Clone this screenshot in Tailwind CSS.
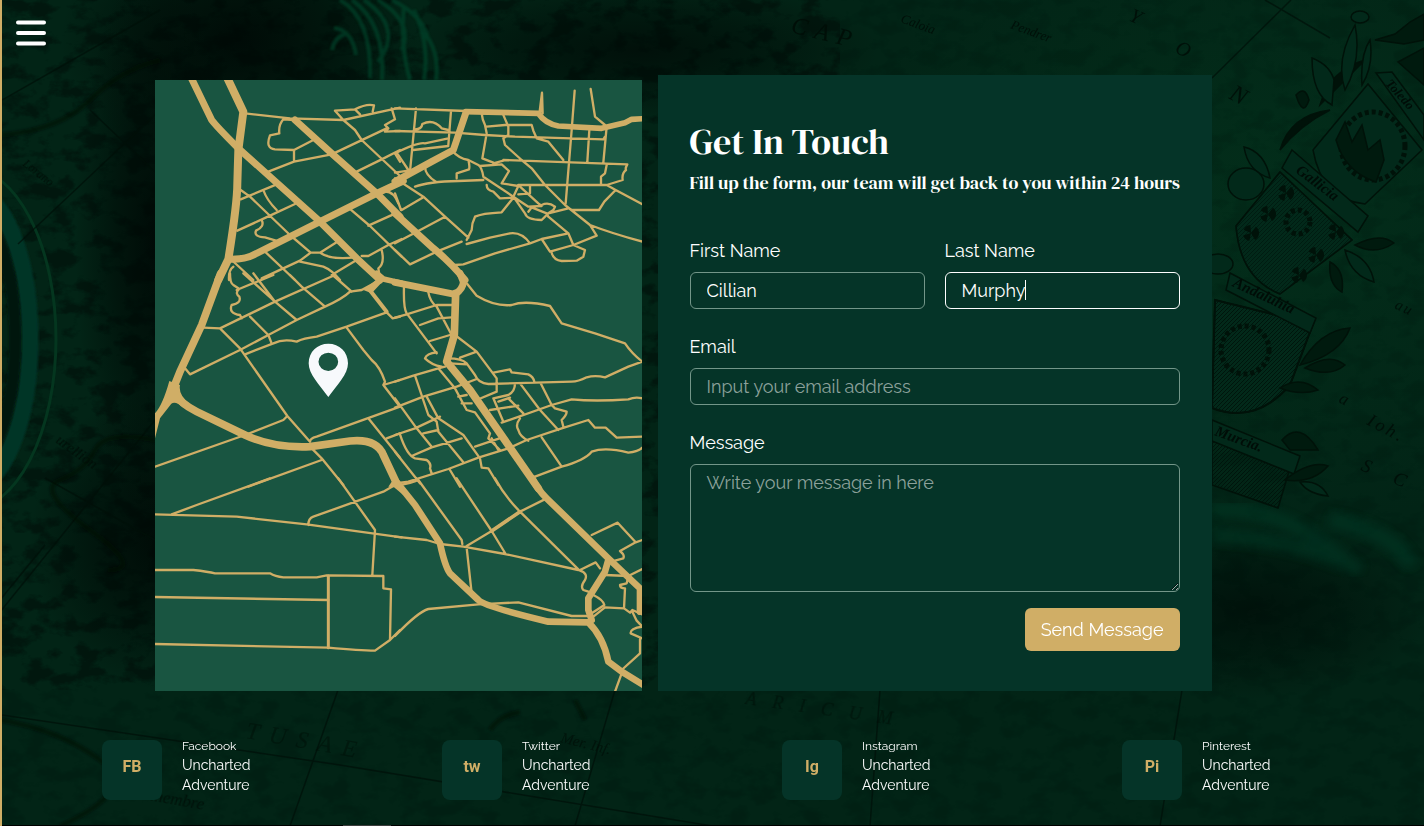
<!DOCTYPE html>
<html lang="en">
<head>
<meta charset="utf-8">
<meta name="viewport" content="width=device-width, initial-scale=1">
<title>Uncharted Adventure – Get In Touch</title>
<script src="https://cdn.jsdelivr.net/npm/@tailwindcss/browser@4"></script>
</head>
<body class="relative min-h-screen overflow-x-hidden border-l-2 border-[#d0ae66] bg-[#022114] font-['Raleway','Lato',sans-serif] text-white">

<!-- Old chart backdrop -->
<svg class="absolute inset-0 -z-10 h-full w-full" viewBox="2 0 1422 826" preserveAspectRatio="xMidYMid slice" aria-hidden="true">
  <defs>
    <radialGradient id="dark"><stop offset="0" stop-color="#000805" stop-opacity=".9"/><stop offset=".5" stop-color="#000c07" stop-opacity=".6"/><stop offset="1" stop-color="#000c07" stop-opacity="0"/></radialGradient>
    <radialGradient id="lit"><stop offset="0" stop-color="#03341d" stop-opacity=".6"/><stop offset="1" stop-color="#03341d" stop-opacity="0"/></radialGradient>
    <filter id="terrain" x="0" y="0" width="100%" height="100%" color-interpolation-filters="sRGB"><feTurbulence type="fractalNoise" baseFrequency=".04 .06" numOctaves="5" seed="8"/><feColorMatrix values="0 0 0 0 0  0 0 0 0 .03  0 0 0 0 .02  5 0 0 0 -2.4"/></filter>
    <filter id="soft"><feGaussianBlur stdDeviation="5"/></filter>
    <filter id="soft1"><feGaussianBlur stdDeviation="1"/></filter>
    <pattern id="hatch" width="4" height="4" patternUnits="userSpaceOnUse"><path d="M0 4 4 0" stroke="#00150c" stroke-width="1"/></pattern>
  </defs>
  <rect width="1424" height="826" fill="#022416"/>
  <ellipse cx="1270" cy="200" rx="420" ry="330" fill="url(#lit)"/>
  <ellipse cx="240" cy="40" rx="180" ry="130" fill="url(#dark)"/>
  <ellipse cx="160" cy="540" rx="130" ry="150" fill="url(#dark)"/>
  <ellipse cx="155" cy="240" rx="80" ry="280" fill="url(#dark)"/>
  <ellipse cx="640" cy="50" rx="240" ry="70" fill="url(#dark)" opacity=".8"/>
  <ellipse cx="1250" cy="610" rx="180" ry="90" fill="url(#dark)" opacity=".7"/>
  <rect width="840" height="690" filter="url(#terrain)" opacity=".45"/>
  <rect y="690" width="840" height="136" filter="url(#terrain)" opacity=".15"/>
  <rect x="840" width="584" height="826" filter="url(#terrain)" opacity=".12"/>

  <!-- Plume -->
  <g fill="none" stroke="#044a2e" stroke-width="4" opacity=".6" filter="url(#soft1)">
    <path d="M332 50Q334 38 345 34M334 28Q352 30 356 55M340 0Q372 18 370 78M352 0Q386 24 382 80M364 0Q404 28 378 62M378 0Q414 22 402 50M392 0Q424 16 428 40M404 6Q400 46 410 80M414 10Q430 44 424 80M422 30Q440 50 436 80"/>
  </g>
  <!-- Brass ring -->
  <g fill="none">
    <ellipse cx="-32" cy="339" rx="62" ry="150" stroke="#043626" stroke-width="17" filter="url(#soft1)"/>
    <ellipse cx="-32" cy="339" rx="47" ry="130" stroke="#00160e" stroke-width="12" filter="url(#soft1)"/>
    <ellipse cx="-34" cy="339" rx="90" ry="172" stroke="#04361f" stroke-width="3"/>
  </g>
  <!-- Rope -->
  <g fill="none" stroke="#04402a" stroke-width="14" opacity=".45" filter="url(#soft)">
    <path d="M1212 510Q1280 505 1345 560M1212 535Q1300 540 1360 570M1330 520Q1390 530 1412 565"/>
  </g>

  <!-- Rhumb lines -->
  <g stroke="#000f08" stroke-width="1.5" fill="none" opacity=".7">
    <path d="M18 244 160 110M2 100 160 10M0 612 155 420M0 600 45 545M1291 0 1212 78M1265 0 1330 38M90 110 155 172M2 715 340 765 712 826M338 690 290 826M615 690 575 826M1182 690 1160 826M880 690 870 826M45 478 155 540"/>
  </g>
  <g stroke="#000b06" stroke-width="5" fill="none" opacity=".5" filter="url(#soft1)">
    <path d="M2 135Q60 130 90 100T160 60M155 440Q105 430 95 450T60 480 90 530 108 570M0 720Q60 730 100 760T60 826M490 730Q500 715 520 712M575 700 585 720"/>
  </g>

  <!-- Chart lettering -->
  <g font-family="'Liberation Serif',serif" font-style="italic" fill="#000d07" opacity=".85">
    <text x="745" y="704" font-size="18" letter-spacing="16" opacity=".6" transform="rotate(8 745 704)">ARICUM</text>
    <text x="790" y="32" font-size="24" letter-spacing="8" transform="rotate(14 790 32)">CAP</text>
    <text x="1128" y="20" font-size="20" transform="rotate(25 1128 20)">Y</text>
    <text x="1174" y="52" font-size="20" transform="rotate(25 1174 52)">O</text>
    <text x="1228" y="98" font-size="24" transform="rotate(28 1228 98)">N</text>
    <text x="1338" y="402" font-size="17" transform="rotate(25 1338 402)">a</text>
    <text x="1366" y="424" font-size="18" letter-spacing="3" transform="rotate(28 1366 424)">Ioh.</text>
    <text x="1360" y="470" font-size="19" letter-spacing="10" transform="rotate(22 1360 470)">S C</text>
    <text x="1394" y="308" font-size="15" letter-spacing="2" transform="rotate(25 1394 308)">au</text>
    <text x="55" y="442" font-size="15" transform="rotate(36 55 442)">urellion</text>
    <text x="245" y="738" font-size="24" letter-spacing="10" opacity=".5" transform="rotate(10 245 738)">TUSAE</text>
    <text x="125" y="796" font-size="17" opacity=".8" transform="rotate(10 125 796)">Bormembre</text>
    <text x="560" y="742" font-size="15" opacity=".7" transform="rotate(14 560 742)">Mer. Inf.</text>
    <text x="900" y="22" font-size="13" transform="rotate(20 900 22)">Caloia</text>
    <text x="1010" y="28" font-size="13" transform="rotate(20 1010 28)">Pendrer</text>
    <text x="22" y="165" font-size="12" transform="rotate(38 22 165)">Lorano</text>
  </g>

  <!-- Heraldic shields -->
  <g stroke="#001209" stroke-width="1.5" fill="#02291a">
    <path fill="#001209" d="M1280 150Q1290 115 1330 110 1300 125 1280 150ZM1365 60Q1330 70 1320 105L1345 80Z"/>
    <path d="M1312 58Q1330 65 1334 80L1332 105Q1312 95 1312 58ZM1345 90Q1335 60 1355 25 1362 60 1345 90ZM1362 85Q1360 55 1370 40 1374 65 1362 85ZM1244 147Q1265 152 1270 178 1248 172 1244 147Z"/>
    <ellipse cx="1360" cy="17" rx="9" ry="6"/><ellipse cx="1246" cy="184" rx="18" ry="16"/><ellipse cx="1218" cy="264" rx="15" ry="10"/>
    <path fill="#001a0e" d="M1375 40 1395 34 1410 22 1424 14V40L1404 44ZM1398 62 1424 48V85Z"/>
    <path d="M1313 150 1368 84 1422 150 1365 204Q1322 200 1313 150Z"/>
    <path d="M1376 73 1392 72 1424 115V140Z"/>
    <ellipse cx="1373" cy="146" rx="32" ry="34" fill="none" stroke-width="5" stroke-dasharray="4 3"/>
    <path fill="#001a0e" d="M1336 140 1345 122 1352 142 1362 125 1368 150 1380 140 1384 160 1376 182Q1345 172 1336 140Z"/>
    <path d="M1280 172 1236 226Q1240 278 1280 294L1352 240Z"/>
    <path fill="url(#hatch)" d="M1280 172 1236 226Q1240 278 1280 294L1352 240Z" opacity=".6"/>
    <path d="M1292 150 1368 216 1358 232 1282 168Z"/>
    <path d="M1215 300 1313 324 1290 385Q1255 425 1212 408Z"/>
    <path fill="url(#hatch)" stroke-width="2" d="M1215 300 1313 324 1290 385Q1255 425 1212 408Z"/>
    <path d="M1230 273 1316 318 1310 333 1226 290Z"/>
    <path fill="url(#hatch)" d="M1212 440 1290 468 1278 508 1212 485Z"/>
    <path d="M1212 420 1300 456 1294 474 1212 441Z"/>
    <path fill="#001a0e" d="M1300 365Q1320 330 1350 328 1340 355 1300 365ZM1305 368Q1330 352 1345 365 1330 378 1305 368ZM1280 388Q1300 375 1318 390 1300 396 1280 388ZM1355 245Q1380 232 1394 243 1375 256 1355 245ZM1330 262Q1345 270 1342 292 1328 285 1330 262ZM1285 480Q1310 460 1328 466 1312 484 1285 480ZM1282 440Q1300 420 1318 450L1290 450ZM1296 95Q1305 85 1309 100 1303 118 1296 95Z"/>
    <path d="M1345 250Q1370 258 1374 282 1350 275 1345 250ZM1300 482Q1320 480 1328 496 1308 494 1300 482Z"/>
    <g fill="none" stroke-width="8" stroke-dasharray="4 3"><circle cx="1286" cy="193" r="4"/><circle cx="1268" cy="214" r="4"/><circle cx="1251" cy="233" r="4"/><circle cx="1336" cy="232" r="4"/><circle cx="1316" cy="255" r="4"/><circle cx="1299" cy="275" r="4"/><circle cx="1298" cy="222" r="12" stroke-width="5"/><circle cx="1245" cy="350" r="24" stroke-width="5"/></g>
  </g>
  <g font-family="'Liberation Serif',serif" font-style="italic" font-weight="700" fill="#000d07">
    <text x="1295" y="172" font-size="15" transform="rotate(37 1295 172)">Gallicia</text>
    <text x="1232" y="286" font-size="15" transform="rotate(25 1232 286)">Andaluhia</text>
    <text x="1214" y="435" font-size="15" transform="rotate(20 1214 435)">Murcia.</text>
    <text x="1385" y="84" font-size="13" transform="rotate(48 1385 84)">Toledo</text>
  </g>
  <rect y="825" width="1424" height="1" fill="#000"/>
  <rect x="343" y="825" width="48" height="1" fill="#3c3c3c"/>
</svg>

<header class="flex px-3.5 pt-5">
  <button type="button" aria-label="Open menu" class="block">
    <svg class="h-[26px] w-[30px]" viewBox="0 0 30 26" fill="none" stroke="#fff" stroke-width="4" stroke-linecap="round" aria-hidden="true"><path d="M2 2.5H28M2 13H28M2 23.5H28"/></svg>
  </button>
</header>

<main class="pt-[29px] pr-[60px]">
  <div class="mx-auto grid w-full max-w-[1057px] grid-cols-[minmax(0,487fr)_minmax(0,554fr)] gap-4">
    <div class="pt-[5px]">
    <!-- Street map -->
    <svg class="h-full w-full bg-[#195541]" viewBox="15 30 1461 1833" preserveAspectRatio="xMidYMid slice" fill="none" stroke="#d0ae66" stroke-width="7" stroke-linejoin="round" stroke-linecap="round" role="img" aria-label="Street map with our location">
      <g>
        <g stroke-width="21">
          <path d="M122 20 185 150Q200 170 265 235L510 455 620 565 690 630"/>
          <path stroke-width="24" d="M230 20 280 125 265 240 262 340Q262 400 235 568L205 630"/>
          <path d="M245 568Q290 568 320 550L510 455 680 370 760 333"/>
          <path d="M435 150 545 250 680 370 750 440"/>
        </g>
        <path d="M285 130 420 145 580 150 750 113M435 150 400 148Q385 165 388 190L360 196Q345 235 375 238L432 240 490 210M432 240V275M355 305 432 275 545 253 640 208 710 175M555 122 580 150 615 180 635 210 750 318M555 122 615 118 630 133M615 118Q650 100 672 106L668 125M725 115 735 148 705 165 715 175 705 185 750 183M620 305 695 268 750 240M735 250 750 275M272 360 300 380 420 495 482 548M272 388 380 343M340 360Q350 390 380 420M262 482 360 437 435 402M335 450Q345 470 318 482 310 500 345 502L378 512M335 625 450 572 482 548 510 548 562 515M510 548Q540 570 615 562M450 575 520 590Q545 600 570 630M345 545 435 630M245 570 310 630M237 630Q235 600 250 590M598 415 660 468 755 560M655 467 730 433M635 558 655 558 715 525 755 507M695 540Q705 580 685 595L690 625M545 615 620 570M700 365Q730 360 745 400"/>
      </g>
      <g transform="translate(735 0)">
        <g stroke-width="21">
          <path d="M0 335 110 275 175 240 212 130"/>
          <path stroke-width="17" d="M212 125 430 130Q450 160 490 168L620 175 690 158 710 148 745 146"/>
          <path d="M0 430 115 535Q170 580 210 630"/>
        </g>
        <path d="M434 125 441 68 443 130" fill="#d0ae66"/>
        <path d="M0 115 215 123M63 115 45 305M0 183 180 188 270 195 360 200 625 208M168 123 160 225M60 178Q80 178 82 162 115 145 140 175L160 180M0 250Q70 215 90 220L160 205M55 240 160 228M5 248 40 300M0 308 40 302M539 62 530 180 512 400M587 57 600 140 630 165M583 180 577 275M635 170 625 278M625 208 630 200M325 270 697 283Q690 295 693 300 680 310 683 330L635 345 370 345M635 285 630 310 618 320V345M635 345 662 360 742 403M662 360 628 395 612 420H530M323 130 340 170V195L325 205 330 225 380 270 410 295 450 345 510 405 585 465Q650 490 742 515M585 465 605 497 535 525 520 490M260 130Q262 150 270 165L275 190 262 265 295 278M262 130 320 128M275 170 330 165H410L415 182 425 205 460 215 505 270M170 240Q190 265 220 270L250 285Q260 290 265 320L355 380M295 280 325 272M255 288 320 283 342 303 320 340M220 270Q225 290 222 298L185 310V325M90 290Q90 315 125 337M60 350Q100 335 190 333L265 330M275 345Q275 360 295 365L315 385 355 383M320 340 370 348 355 380 400 410 440 408 430 400 375 350M405 345V370L370 373M355 380 390 430Q395 450 440 450L460 430 520 415M400 425 410 412 455 430 460 440M440 405Q460 395 480 410L475 420 460 430M460 440 520 490 440 507 405 520Q380 485 345 490L285 503 215 522M355 383 320 427Q260 430 240 440 230 460 230 480L215 510M440 507 465 545 535 525 570 540 565 560 545 572 500 573Q475 570 470 548M0 325 85 380 150 440 220 503M20 420 85 382M0 370 18 420M0 520 60 488 150 440M125 545 200 515M0 540 45 583 125 545M180 585 205 583 300 550 405 520"/>
      </g>
      <g transform="translate(0 615)">
        <g stroke-width="23">
          <path d="M212 -5 155 150 90 290 68 345"/>
          <path d="M75 355Q90 385 140 410L285 480Q370 520 480 515L600 498Q680 490 700 540L740 625"/>
          <path stroke-width="17" d="M680 -5 700 12 755 25"/>
          <path stroke-width="12" d="M655 40 710 110"/>
        </g>
        <path stroke="none" fill="#d0ae66" d="M58 318 90 330Q84 360 120 388L100 398Q76 376 64 386L30 430 15 490V415Q38 390 58 318ZM690 5 705 12 665 55 640 45Z"/>
        <path d="M15 575 285 480 400 435 412 423M240 -5Q240 25 250 30L265 40M310 -5 375 80 440 135M280 -5 375 80M370 0 260 45M265 45Q255 55 268 65 275 85 245 90 235 115 270 120L275 130M160 158 210 160 375 80 555 0M210 160 270 220 412 423 480 500M300 125 355 180 365 205M105 280 120 298 270 225 355 180 440 135 525 95Q580 70 600 50L635 45 690 15M285 238 370 205Q400 190 440 200 460 190 500 185L590 155 710 112 728 130 750 125M420 0 455 35 525 95M548 0 605 50M590 158 640 225 665 255Q690 275 705 320L700 330 750 395M700 330 750 315M480 500Q480 490 500 485L750 395M655 430 750 548M710 490 750 475M480 515 515 550 580 630M515 555 295 635"/>
      </g>
      <g transform="translate(735 615)">
        <g stroke-width="21">
          <path d="M0 22 180 58Q205 40 205 20L195 -5"/>
          <path stroke-width="23" d="M182 55 178 180 155 260 225 345 430 640"/>
        </g>
        <path d="M27 35Q25 100 35 115L125 235M0 128 35 118 125 90H170M100 52Q105 80 125 95L170 180M75 150 130 130 170 127M105 198 165 180M125 232Q95 235 90 250 110 270 140 275M160 250Q200 250 215 265M165 265 215 268M215 25 245 62Q300 95 350 90 390 75 465 93 490 130 500 145L600 175 690 205Q710 235 742 260L700 275 630 307Q600 300 575 307 550 320 530 320L280 327Q250 325 240 300L215 265M180 180 245 230 305 310V350L245 375M195 248 245 230M295 293 345 283 350 292 400 298Q415 305 418 320M0 320 55 302 130 280 150 275M60 302 100 420 125 440M0 398 85 365 185 335 245 312M130 280 180 340 215 405 240 412 285 475 280 490 315 525M95 365 130 430 205 480 255 550M0 370 65 460 110 515M0 480 60 460 135 425M125 440 130 470 205 562M15 478Q35 540 60 550L95 555Q110 565 105 580L110 595M85 475 130 465M50 543 110 517 200 490M240 515 320 488M0 625 40 620 160 582 250 548 340 520 395 495 500 460 580 435 600 458H632L665 488 742 485M0 530 75 625M165 585 195 635M255 550 260 578 280 580 310 630M320 443 470 390 530 373Q600 380 700 373 720 365 742 370M375 325 435 405 490 465M437 325 470 390 480 400 515 410Q515 420 500 435L505 455M375 430Q360 450 370 465 375 485 400 497M440 487 500 575 420 605M500 575Q570 555 590 530 630 515 700 533 730 530 742 518M360 325Q360 350 340 360L295 370 325 440M340 370 385 415M285 405 370 392M310 380 345 368M190 365 215 360M200 385 230 385M290 490 310 525"/>
      </g>
      <g transform="translate(0 1230)">
        <path d="M15 103 260 110 470 133 755 172M65 103 140 75 360 -5M475 135Q475 115 490 110L700 35 735 15M565 -5 675 150 667 285M15 270H130Q175 275 195 280H360Q375 290 400 292H500L530 286 700 288V325L723 328 720 480 750 450M720 480 675 512Q630 512 535 503L15 492M15 351 535 360"/>
        <path stroke-width="9" d="M535 288V503"/>
        <path fill="#d0ae66" stroke="none" d="M735 -10 760 45 732 22 715 20Z"/>
      </g>
      <g transform="translate(735 1230)">
        <g stroke-width="20">
          <path d="M0 0 60 75 135 190Q150 260 165 280L250 360Q270 380 460 425L580 427Q625 470 640 545L680 575 745 615"/>
          <path d="M412 -5Q425 25 455 55L640 235 735 325V395"/>
          <path d="M640 240 630 275 580 355V390L590 420"/>
        </g>
        <path d="M0 170 95 180 135 192 205 200 330 222 550 270M10 15Q50 10 70 0L200 180 202 192M215 203 230 340 250 362M215 198 290 153 375 95 455 55M185 -5 290 153 332 222M300 -5Q330 50 375 95L550 268M0 468Q70 395 100 387L250 373 370 367 530 408H580M590 165 668 128 722 187 742 180M722 187 675 213Q690 225 685 235L660 242M555 270 602 247 615 265M555 272Q580 280 570 300 555 320 565 330L580 335M630 285 700 288 742 267M700 290 695 310 675 315Q675 325 690 325L687 385M595 345Q625 360 628 375L590 400M595 410 630 382 687 385 705 398 712 390 742 403M712 395 725 422 742 440Q705 445 707 460L742 475M680 570 735 520V478M680 580 660 635"/>
        <path stroke-width="11" d="M290 153 375 95"/>
      </g>
      <path transform="translate(0 615)" fill="#f7f9fc" fill-rule="evenodd" stroke="none" d="M535 206C502 206 476 230 476 265C476 298 508 329 535 366C562 329 594 298 594 265C594 230 568 206 535 206ZM535 233A29 27 0 1 1 535 288A29 27 0 1 1 535 233Z"/>
    </svg>
    </div>

    <section class="bg-[#053428] px-8 pt-[47px] pb-10">
      <h1 class="font-['DM_Serif_Display','DM_Serif_Text','Liberation_Serif',serif] text-4xl leading-10 font-normal">Get In Touch</h1>
      <p class="mt-[7px] font-['DM_Serif_Display','DM_Serif_Text','Liberation_Serif',serif] text-lg leading-7 font-normal whitespace-nowrap">Fill up the form, our team will get back to you within 24 hours</p>
      <form class="mt-10 flex flex-col gap-6 text-lg">
        <div class="grid grid-cols-2 gap-5">
          <div class="flex flex-col gap-2">
            <label for="first" class="leading-[27px]">First Name</label>
            <input id="first" type="text" value="Cillian" class="h-[37px] w-full rounded-md border border-[#739689] px-4 outline-none">
          </div>
          <div class="flex flex-col gap-2">
            <label for="last" class="leading-[27px]">Last Name</label>
            <div class="relative">
              <input id="last" type="text" value="Murphy" class="h-[37px] w-full rounded-md border border-white px-4 outline-none">
              <span class="absolute top-2 left-20 h-5 w-px bg-white"></span>
            </div>
          </div>
        </div>
        <div class="flex flex-col gap-2">
          <label for="email" class="leading-[27px]">Email</label>
          <input id="email" type="email" placeholder="Input your email address" class="h-[37px] w-full rounded-md border border-[#739689] px-4 outline-none placeholder:text-[#8ca19b]">
        </div>
        <div class="flex flex-col gap-2">
          <label for="message" class="leading-[27px]">Message</label>
          <textarea id="message" placeholder="Write your message in here" class="block h-32 w-full rounded-md border border-[#739689] px-4 py-1 leading-7 outline-none placeholder:text-[#8ca19b]"></textarea>
          <button type="submit" class="mt-2 h-[43px] self-end rounded-md bg-[#d0ae66] px-4">Send Message</button>
        </div>
      </form>
    </section>
  </div>
</main>

<footer class="grid grid-cols-4 pt-[46px] pr-[62px] pb-[26px]">
  <a href="#facebook" class="flex items-end gap-5 pl-[100px]">
    <span class="flex size-15 items-center justify-center rounded-lg bg-[#053428] pb-1.5 font-['Roboto',sans-serif] text-base font-bold text-[#d0ae66]">FB</span>
    <span class="flex flex-col pb-[5px] text-sm leading-5"><span class="text-xs leading-[18px]">Facebook</span><span>Uncharted</span><span>Adventure</span></span>
  </a>
  <a href="#twitter" class="flex items-end gap-5 pl-[100px]">
    <span class="flex size-15 items-center justify-center rounded-lg bg-[#053428] pb-1.5 font-['Roboto',sans-serif] text-base font-bold text-[#d0ae66]">tw</span>
    <span class="flex flex-col pb-[5px] text-sm leading-5"><span class="text-xs leading-[18px]">Twitter</span><span>Uncharted</span><span>Adventure</span></span>
  </a>
  <a href="#instagram" class="flex items-end gap-5 pl-[100px]">
    <span class="flex size-15 items-center justify-center rounded-lg bg-[#053428] pb-1.5 font-['Roboto',sans-serif] text-base font-bold text-[#d0ae66]">Ig</span>
    <span class="flex flex-col pb-[5px] text-sm leading-5"><span class="text-xs leading-[18px]">Instagram</span><span>Uncharted</span><span>Adventure</span></span>
  </a>
  <a href="#pinterest" class="flex items-end gap-5 pl-[100px]">
    <span class="flex size-15 items-center justify-center rounded-lg bg-[#053428] pb-1.5 font-['Roboto',sans-serif] text-base font-bold text-[#d0ae66]">Pi</span>
    <span class="flex flex-col pb-[5px] text-sm leading-5"><span class="text-xs leading-[18px]">Pinterest</span><span>Uncharted</span><span>Adventure</span></span>
  </a>
</footer>
</body>
</html>
